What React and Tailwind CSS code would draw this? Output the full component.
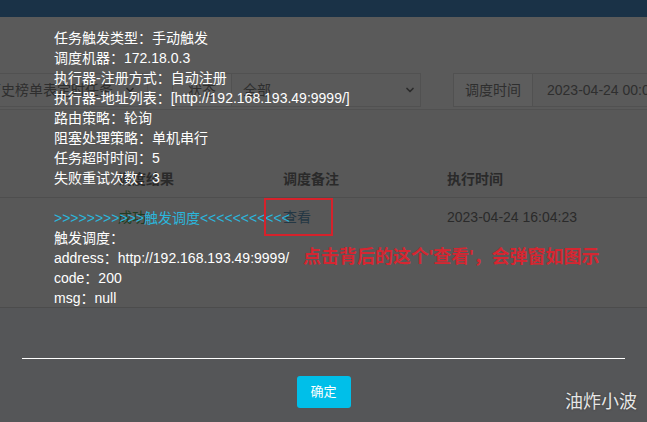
import { ChevronDown } from 'lucide-react';

const FONT = 'font-["Liberation_Sans","Noto_Sans_CJK_SC",sans-serif]';

const LOG_LINES = [
  '任务触发类型：手动触发',
  '调度机器：172.18.0.3',
  '执行器-注册方式：自动注册',
  '执行器-地址列表：[http://192.168.193.49:9999/]',
  '路由策略：轮询',
  '阻塞处理策略：单机串行',
  '任务超时时间：5',
  '失败重试次数：3',
];

const TRIGGER_LINES = ['触发调度：', 'address：http://192.168.193.49:9999/', 'code：200', 'msg：null'];

function Chevron() {
  return <ChevronDown className="w-[12px] h-[12px] text-[#2b2b2b]" strokeWidth={3.5} />;
}

export default function App() {
  return (
    <div className={`relative w-[647px] h-[422px] overflow-hidden bg-[#555658] text-[14px] ${FONT}`}>
      {/* page behind the dialog, dimmed */}
      <div className="h-[17px] bg-[#1a3247]" />

      <div className="h-[92px] bg-[#5a5a5a] pt-[56px]">
        <div className="flex h-[34px] text-[#2e2e2e] whitespace-nowrap">
          <div className="shrink-0 ml-[-26px] w-[174px] flex items-center justify-between pl-[12px] pr-[11px] border border-[#515151]">
            <span>历史榜单表定时任务</span>
            <Chevron />
          </div>
          <div className="shrink-0 ml-[24px] w-[60px] flex items-center justify-center border border-[#515151] bg-[#5d5d5d]">
            状态
          </div>
          <div className="shrink-0 w-[189px] flex items-center justify-between pl-[11px] pr-[4px] border border-l-0 border-[#515151]">
            <span>全部</span>
            <Chevron />
          </div>
          <div className="shrink-0 ml-[32px] w-[80px] flex items-center justify-center border border-[#515151] bg-[#5d5d5d]">
            调度时间
          </div>
          <div className="shrink-0 w-[140px] flex items-center pl-[14px] border border-l-0 border-[#515151]">
            2023-04-24 00:00:00
          </div>
        </div>
      </div>

      <div className="h-[198px] bg-[#585858] border-t border-[#515151]">
        <div className="h-[88px] flex items-end pb-[8px] pl-[118px] border-b border-[#4e4e4e] text-[#2a2a2a] font-bold leading-[20px]">
          <span className="w-[165px]">调度结果</span>
          <span className="w-[164px]">调度备注</span>
          <span>执行时间</span>
        </div>
        <div className="flex pt-[9px] pl-[118px] leading-[20px]">
          <span className="w-[165px] text-[#1f3d22]">成功</span>
          <span className="w-[164px] text-[#243744]">查看</span>
          <span className="text-[#2a2a2a]">2023-04-24 16:04:23</span>
        </div>
      </div>

      <div className="border-t border-[#4c4c4c]" />

      {/* dialog content */}
      <div className="absolute inset-0 flex flex-col pt-[28px]">
        <div className="pl-[54px] text-white leading-[20px] whitespace-nowrap">
          {LOG_LINES.map((line) => (
            <div key={line}>{line}</div>
          ))}
          <div className="h-[20px]" />
          <div className="text-[#2bb6dc]">{'>>>>>>>>>>>触发调度<<<<<<<<<<<'}</div>
          {TRIGGER_LINES.map((line) => (
            <div key={line}>{line}</div>
          ))}
        </div>
        <div className="mx-[22px] mt-[50px] h-px bg-white" />
        <button className="mx-auto mt-[17px] w-[54px] h-[32px] rounded-[3px] bg-[#00bfe9] text-white text-[13px]">
          确定
        </button>
      </div>

      {/* annotations */}
      <div className="absolute left-[264px] top-[198px] w-[69px] h-[38px] border-2 border-[#d6222b]" />
      <div className="absolute left-[303px] top-[245px] text-[18px] leading-[24px] font-bold text-[#d62631] whitespace-nowrap">
        点击背后的这个'查看'，会弹窗如图示
      </div>
      <div className="absolute right-[10px] bottom-[6px] text-[18px] text-[#e6e6e6] [text-shadow:0_0_2px_#333]">
        油炸小波
      </div>
    </div>
  );
}
